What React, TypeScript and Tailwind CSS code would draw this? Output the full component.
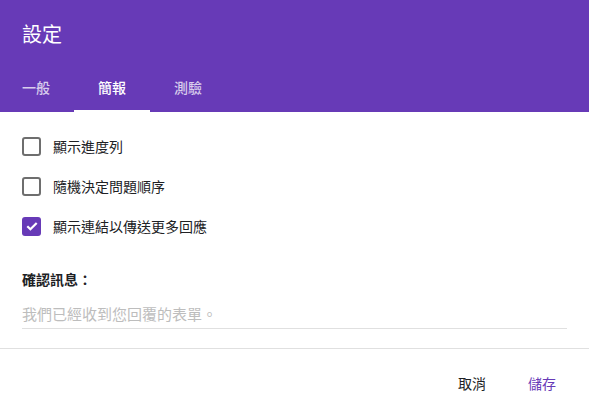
import React, { useState } from 'react';

const font = { fontFamily: '"Noto Sans CJK TC", "Noto Sans", sans-serif' };

const tabs = ['一般', '簡報', '測驗'];

const options = [
    { label: '顯示進度列', checked: false },
    { label: '隨機決定問題順序', checked: false },
    { label: '顯示連結以傳送更多回應', checked: true },
];

function Checkbox({ checked }: { checked: boolean }) {
    if (checked) {
        return (
            <div className="w-[19px] h-[19px] rounded-[3px] bg-[#673ab7] flex items-center justify-center">
                <svg width="14" height="14" viewBox="0 0 14 14" fill="none">
                    <path d="M2.3 7.2l3.1 3.1 6.3-6.4" stroke="#fff" strokeWidth="2.2" />
                </svg>
            </div>
        );
    }
    return <div className="w-[19px] h-[19px] rounded-[3px] border-2 border-[#6e6e6e]" />;
}

export default function App() {
    const [active] = useState(1);

    return (
        <div className="w-[589px] h-[414px] bg-white flex flex-col" style={font}>
            {/* Header */}
            <div className="bg-[#673ab7] pt-5 flex flex-col">
                <h1 className="pl-[22px] h-7 text-[20px] leading-7 text-white">設定</h1>
                <div className="mt-4 flex h-12 -ml-[2px]">
                    {tabs.map((t, i) => (
                        <div
                            key={t}
                            className={
                                'px-6 flex items-center text-[14px] font-medium border-b-2 ' +
                                (i === active ? 'text-white border-white' : 'text-white/75 border-transparent')
                            }
                        >
                            {t}
                        </div>
                    ))}
                </div>
            </div>

            {/* Body */}
            <div className="px-[22px] pt-[14px] pb-[19px] border-b border-[#e0e0e0]">
                {options.map((o) => (
                    <div key={o.label} className="h-10 flex items-center gap-3">
                        <Checkbox checked={o.checked} />
                        <span className="text-[14px] text-[#202124]">{o.label}</span>
                    </div>
                ))}
                <div className="mt-[23px] text-[14px] leading-5 font-bold text-[#202124]">確認訊息：</div>
                <div className="mt-3 h-7 border-b border-[#e0e0e0] flex items-center text-[15px] text-[#bdbdbd]">
                    我們已經收到您回覆的表單。
                </div>
            </div>

            {/* Footer */}
            <div className="flex justify-end gap-[10px] pt-4 pr-[17px]">
                <button className="h-9 px-4 text-[14px] text-[#202124]">取消</button>
                <button className="h-9 px-4 text-[14px] text-[#673ab7]">儲存</button>
            </div>
        </div>
    );
}
